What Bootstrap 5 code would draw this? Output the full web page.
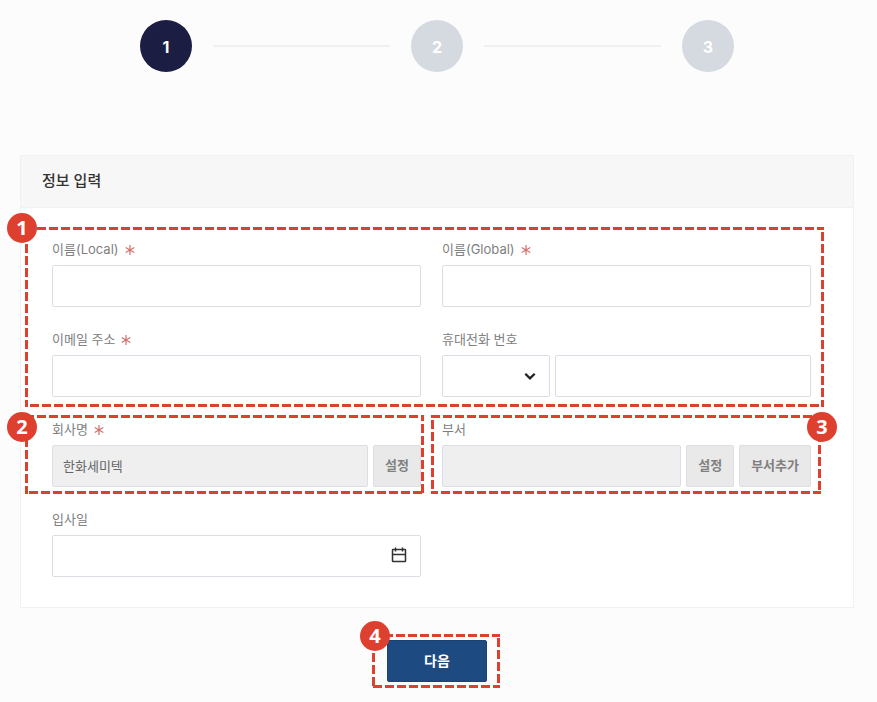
<!DOCTYPE html>
<html lang="ko">
<head>
<meta charset="utf-8">
<meta name="viewport" content="width=device-width, initial-scale=1">
<title>정보 입력</title>
<link href="https://cdn.jsdelivr.net/npm/bootstrap@5.3.0/dist/css/bootstrap.min.css" rel="stylesheet">
<style>
  body { background: #fcfcfc; font-family: Inter, "Noto Sans CJK KR", sans-serif; font-size: 13px; line-height: 20px; color: #333; }
  .page { padding: 20px 23px 20px 20px; }

  /* progress steps */
  .steps { max-width: 594px; margin-bottom: 83px; list-style: none; }
  .step-dot { width: 52px; height: 52px; padding-top: 2px; background: #d5d9e0; color: #fff; font-size: 16px; font-weight: 700; }
  .step-dot.current { background: #1b1d42; }
  .step-line { height: 2px; margin: 0 21px; background: #f0f0f1; }

  /* form panel */
  .panel { border: 1px solid #f1f1f1; border-radius: 0; }
  .panel-head { padding: 15px 21px 16px; background: #f7f7f7; border-bottom: 1px solid #f1f1f1; font-size: 15px; font-weight: 500; line-height: 20px; }
  .panel-main { padding: 31px 42px 30px 31px; }
  .pair { grid-template-columns: 1fr 1fr; column-gap: 21px; row-gap: 22px; }
  .pair-block { margin-bottom: 22px; }
  .field label { height: 20px; margin-bottom: 6px; color: #808080; }
  .req { width: 10px; height: 12px; margin: 2px 0 0 6px; stroke: #d0706b; }
  .field .form-control, .field .form-select { height: 42px; padding: 0 10px 2px; font-size: 13px; color: #666; border-color: #dbdfe5; border-radius: 2px; }
  .field .form-control:disabled { background: #efefef; opacity: 1; }
  .field-row { gap: 5px; }
  .field .form-select { width: 108px; background-size: 12px 12px; background-position: right 13px center; background-image: url("data:image/svg+xml,%3Csvg xmlns='http://www.w3.org/2000/svg' viewBox='0 0 12 12'%3E%3Cpath d='M1.300 3.800 6 8.400l4.700-4.600' fill='none' stroke='%23222' stroke-width='2.300'/%3E%3C/svg%3E"); }
  .btn-side { height: 42px; padding: 0 11px; font-size: 13px; font-weight: 700; color: #808080; background: #e9e9e9; border: 1px solid #dbdfe5; border-radius: 2px; }
  .date-box .form-control { padding-right: 42px; }
  .date-btn { right: 13px; width: 18px; height: 18px; }
  .btn-next { width: 100px; height: 42px; padding: 0 0 2px; font-size: 14px; font-weight: 700; color: #fff; background: #1d4a80; border: 1px solid #1a4374; border-radius: 2px; }
  .btn-next:hover { color: #fff; background: #173e6d; }
  .next-area { margin-top: 32px; }

  /* numbered callouts laid over the form */
  .callout { position: absolute; z-index: 2; pointer-events: none; }
  .callout svg { width: 100%; height: 100%; display: block; overflow: hidden; }
  .callout rect { fill: none; stroke: #de402f; stroke-width: 6; stroke-dasharray: 9 3; }
  .callout-no { position: absolute; width: 30px; height: 30px; background: #de402f; color: #fff; font-family: "Noto Sans", sans-serif; font-size: 20px; font-weight: 700; }
  .callout-basic { inset: -12px -13px -10px -27px; }
  .callout-basic .callout-no { left: -18px; top: -14px; }
  .callout-company { inset: -4px -3px -7px -27px; }
  .callout-company .callout-no { left: -18px; top: -3px; }
  .callout-dept { inset: -4px -10px -7px -11px; }
  .callout-dept .callout-no { right: -16px; top: -3px; }
  .callout-next { inset: -6px -13px -6px -15px; }
  .callout-next .callout-no { left: -12px; top: -13px; }
</style>
</head>
<body>
<svg class="d-none" aria-hidden="true">
  <symbol id="star" viewBox="0 0 10 12"><path d="M5 1v10M.7 3.500l8.600 5M9.300 3.500l-8.600 5" fill="none" stroke-width="1.200"/></symbol>
</svg>
<main class="page">
  <ol class="steps d-flex align-items-center mx-auto mt-0 p-0">
    <li class="step-dot current rounded-circle d-flex align-items-center justify-content-center flex-shrink-0" aria-current="step">1</li>
    <li class="step-line flex-grow-1" aria-hidden="true"></li>
    <li class="step-dot rounded-circle d-flex align-items-center justify-content-center flex-shrink-0">2</li>
    <li class="step-line flex-grow-1" aria-hidden="true"></li>
    <li class="step-dot rounded-circle d-flex align-items-center justify-content-center flex-shrink-0">3</li>
  </ol>

  <form>
    <section class="panel bg-white">
      <h1 class="panel-head m-0">정보 입력</h1>
      <div class="panel-main">
        <div class="pair pair-block d-grid position-relative">
          <div class="field">
            <label class="d-flex align-items-center" for="nameLocal">이름(Local)<svg class="req" aria-hidden="true"><use href="#star"/></svg></label>
            <input class="form-control" id="nameLocal" type="text" required>
          </div>
          <div class="field">
            <label class="d-flex align-items-center" for="nameGlobal">이름(Global)<svg class="req" aria-hidden="true"><use href="#star"/></svg></label>
            <input class="form-control" id="nameGlobal" type="text" required>
          </div>
          <div class="field">
            <label class="d-flex align-items-center" for="email">이메일 주소<svg class="req" aria-hidden="true"><use href="#star"/></svg></label>
            <input class="form-control" id="email" type="email" required>
          </div>
          <div class="field">
            <label class="d-flex align-items-center" for="phone">휴대전화 번호</label>
            <div class="field-row d-flex">
              <select class="form-select flex-shrink-0" aria-label="국가 번호"><option></option></select>
              <input class="form-control" id="phone" type="tel">
            </div>
          </div>
          <div class="callout callout-basic"><svg aria-hidden="true"><rect width="100%" height="100%"/></svg><span class="callout-no rounded-circle d-flex align-items-center justify-content-center">1</span></div>
        </div>

        <div class="pair d-grid">
          <div class="field position-relative">
            <label class="d-flex align-items-center" for="company">회사명<svg class="req" aria-hidden="true"><use href="#star"/></svg></label>
            <div class="field-row d-flex">
              <input class="form-control" id="company" type="text" value="한화세미텍" disabled>
              <button class="btn btn-side flex-shrink-0" type="button">설정</button>
            </div>
            <div class="callout callout-company"><svg aria-hidden="true"><rect width="100%" height="100%"/></svg><span class="callout-no rounded-circle d-flex align-items-center justify-content-center">2</span></div>
          </div>
          <div class="field position-relative">
            <label class="d-flex align-items-center" for="dept">부서</label>
            <div class="field-row d-flex">
              <input class="form-control" id="dept" type="text" disabled>
              <button class="btn btn-side flex-shrink-0" type="button">설정</button>
              <button class="btn btn-side flex-shrink-0" type="button">부서추가</button>
            </div>
            <div class="callout callout-dept"><svg aria-hidden="true"><rect width="100%" height="100%"/></svg><span class="callout-no rounded-circle d-flex align-items-center justify-content-center">3</span></div>
          </div>
          <div class="field">
            <label class="d-flex align-items-center" for="joinDate">입사일</label>
            <div class="date-box position-relative">
              <input class="form-control" id="joinDate" type="text">
              <button class="date-btn btn p-0 border-0 position-absolute top-50 translate-middle-y d-flex" type="button" aria-label="날짜 선택">
                <svg width="18" height="18" viewBox="0 0 18 18" fill="none" stroke="#333" stroke-width="1.500" aria-hidden="true"><rect x="2.500" y="2.500" width="13" height="12" rx=".5"/><path d="M2.500 7.500h13M5.500 .5v4M12.500 .5v4"/></svg>
              </button>
            </div>
          </div>
        </div>
      </div>
    </section>

    <div class="next-area d-flex justify-content-center">
      <div class="position-relative">
        <button class="btn btn-next" type="submit">다음</button>
        <div class="callout callout-next"><svg aria-hidden="true"><rect width="100%" height="100%"/></svg><span class="callout-no rounded-circle d-flex align-items-center justify-content-center">4</span></div>
      </div>
    </div>
  </form>
</main>
<script src="https://cdn.jsdelivr.net/npm/bootstrap@5.3.0/dist/js/bootstrap.bundle.min.js"></script>
</body>
</html>
